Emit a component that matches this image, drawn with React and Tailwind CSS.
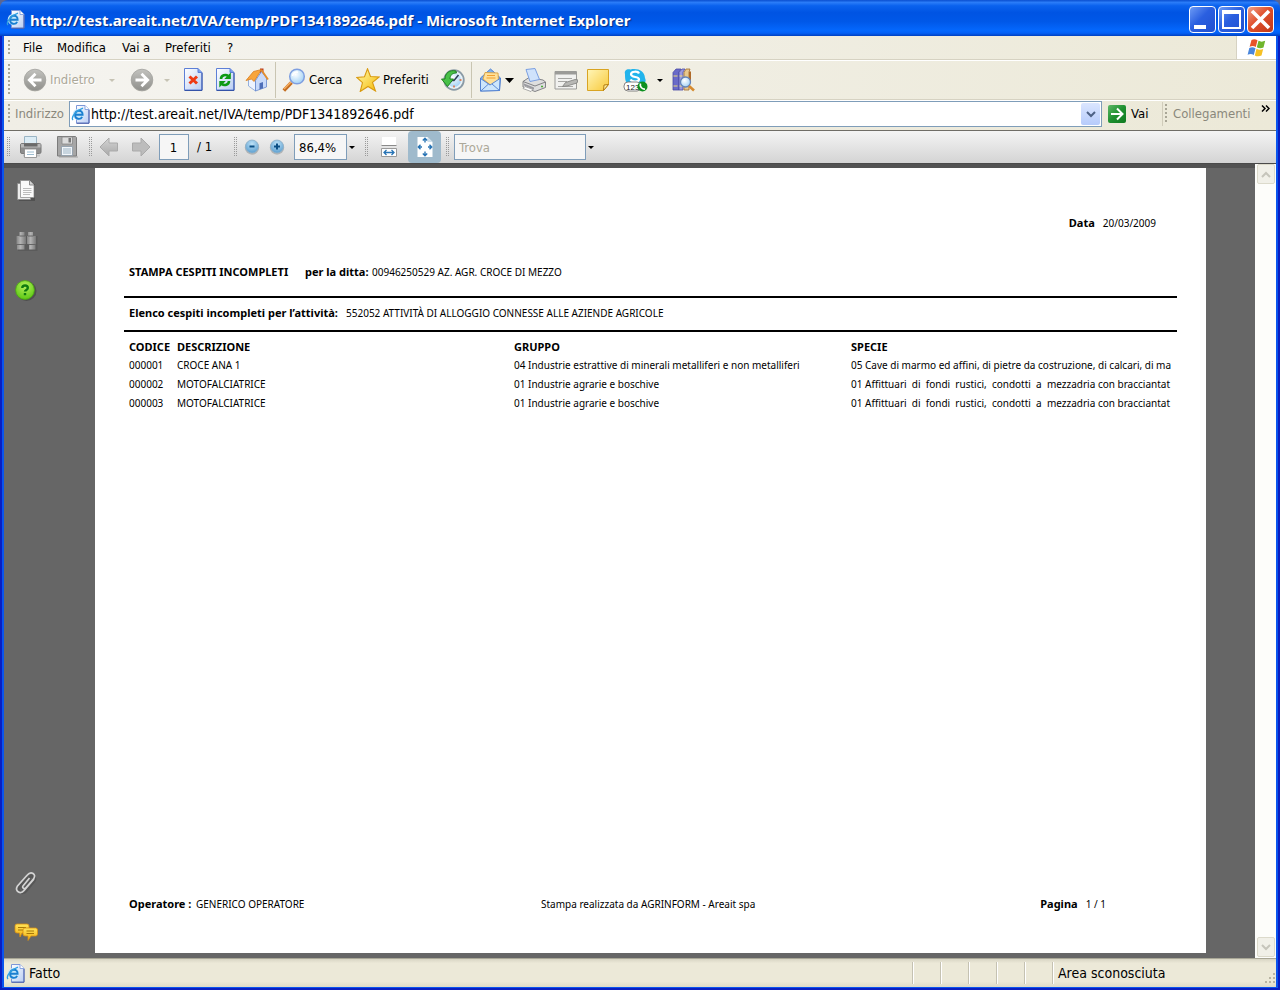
import React from "react";

const ui = "font-['DejaVu_Sans_Condensed','DejaVu_Sans',sans-serif]";

function Gradients() {
  return (
    <svg width="0" height="0" className="absolute" aria-hidden="true">
      <defs>
        <linearGradient id="gPage" x1="0" y1="0" x2="1" y2="1">
          <stop offset="0" stopColor="#ffffff" />
          <stop offset="1" stopColor="#b9cdf3" />
        </linearGradient>
        <linearGradient id="gGray" x1="0" y1="0" x2="0" y2="1">
          <stop offset="0" stopColor="#c2c2be" />
          <stop offset="1" stopColor="#8f8f8b" />
        </linearGradient>
        <linearGradient id="gNote" x1="0" y1="0" x2="1" y2="1">
          <stop offset="0" stopColor="#fff6b8" />
          <stop offset="1" stopColor="#f8c93a" />
        </linearGradient>
        <linearGradient id="gStar" x1="0" y1="0" x2="1" y2="1">
          <stop offset="0" stopColor="#fffbb0" />
          <stop offset="1" stopColor="#f5b800" />
        </linearGradient>
        <linearGradient id="gArrow" x1="0" y1="0" x2="0" y2="1">
          <stop offset="0" stopColor="#d4d4d4" />
          <stop offset="1" stopColor="#a8a8a8" />
        </linearGradient>
        <linearGradient id="gMetal" x1="0" y1="0" x2="1" y2="0">
          <stop offset="0" stopColor="#858585" />
          <stop offset="0.4" stopColor="#b4b4b4" />
          <stop offset="1" stopColor="#777777" />
        </linearGradient>
        <radialGradient id="gBlue" cx="0.5" cy="0.3" r="0.7">
          <stop offset="0" stopColor="#bfe2f7" />
          <stop offset="1" stopColor="#5c9fd0" />
        </radialGradient>
        <radialGradient id="gGreen" cx="0.5" cy="0.3" r="0.7">
          <stop offset="0" stopColor="#b4f05a" />
          <stop offset="1" stopColor="#5cc814" />
        </radialGradient>
        <radialGradient id="gLens" cx="0.4" cy="0.35" r="0.7">
          <stop offset="0" stopColor="#ffffff" />
          <stop offset="1" stopColor="#9fd0f5" />
        </radialGradient>
        <linearGradient id="gGo" x1="0" y1="0" x2="1" y2="1">
          <stop offset="0" stopColor="#5fb868" />
          <stop offset="0.5" stopColor="#1f9030" />
          <stop offset="1" stopColor="#0f7a20" />
        </linearGradient>
        <linearGradient id="gBubble" x1="0" y1="0" x2="0" y2="1">
          <stop offset="0" stopColor="#ffe45a" />
          <stop offset="1" stopColor="#f0ac10" />
        </linearGradient>
      </defs>
    </svg>
  );
}

function Svg({ w, h = w, children }) {
  return (
    <svg width={w} height={h} viewBox={`0 0 ${w} ${h}`} fill="none" className="shrink-0" aria-hidden="true">
      {children}
    </svg>
  );
}

function IePage() {
  return (
    <Svg w={19}>
      <path d="M5.500 .5h8.500l4 4v13.500H5.500z" fill="url(#gPage)" stroke="#7d97d8" />
      <path d="M18 5v13.300H5.500" stroke="#4a5eaa" />
      <path d="M14 .5v4h4" fill="#fff" stroke="#8aa5e0" />
      <circle cx="7.500" cy="9.500" r="5.800" fill="#c4e6fb" />
      <path d="M4 9.800h7.600c.2-5.600-7.500-5.400-7.500.2 0 4.700 5.600 4.800 7 1.800" stroke="#1b7fd0" strokeWidth="1.900" />
      <path d="M2 15C-.5 12 5 5.500 12 3.200" stroke="#2f9fe0" strokeWidth="1.300" />
    </Svg>
  );
}

function RoundArrow({ forward }) {
  return (
    <Svg w={24}>
      <circle cx="12" cy="12.500" r="11" fill="#dedcd2" />
      <circle cx="12" cy="12" r="10.800" fill="url(#gGray)" stroke="#a3a39f" strokeWidth=".8" />
      <g transform={forward ? "rotate(180 12 12)" : undefined} stroke="#fff" strokeWidth="2.800">
        <path d="M6 12h12.500M12.500 5.800 6.300 12l6.200 6.200" />
      </g>
    </Svg>
  );
}

function DocFrame() {
  return (
    <>
      <path d="M3.500 .5h13.500l4 4v17.500h-17.500z" fill="url(#gPage)" stroke="#5d7fd6" />
      <path d="M21 5v17.500h-17.500" stroke="#3453a8" />
      <path d="M17 .5v4h4" fill="#7aa0ee" stroke="#5d7fd6" />
    </>
  );
}

const StopIcon = () => (
  <Svg w={24}>
    <DocFrame />
    <path d="m8.500 8.500 7.500 7M16 8.500l-7.500 7" stroke="#ee3a14" strokeWidth="3" />
  </Svg>
);

const RefreshIcon = () => (
  <Svg w={24}>
    <DocFrame />
    <path d="M8 11c0-4 5-5 7-3" stroke="#0d9a14" strokeWidth="2.600" />
    <path d="M17.800 4.500v6.500h-6.500z" fill="#0d9a14" />
    <path d="M16 13c0 4-5 5-7 3" stroke="#0d9a14" strokeWidth="2.600" />
    <path d="M6.300 19.500v-6.500h6.500z" fill="#0d9a14" />
  </Svg>
);

const HomeIcon = () => (
  <Svg w={24}>
    <path d="M15 .5h3.500v7H15z" fill="#b8381e" />
    <path d="M3.500 11.500v6.500l7 5V12.500L7 7z" fill="#eef4ff" stroke="#7f9fd8" strokeWidth=".8" />
    <path d="m10.500 23 11-4v-9l-5-6.500-6 9z" fill="#c8dafa" stroke="#6688cc" strokeWidth=".8" />
    <path d="m1 12.500 7.500-9 8-2-7.500 12-2.500-2.500z" fill="#f8a53c" stroke="#d97c1c" strokeWidth=".8" />
    <path d="m16.500 2 6.500 9.500" stroke="#e58e2c" strokeWidth="1.800" />
    <path d="M14.500 21.500v-6.300l3.500-1.200v6.300z" fill="#4e6fb8" />
  </Svg>
);

const SearchIcon = () => (
  <Svg w={24}>
    <path d="m1.800 22.500 7.700-8" stroke="#c46d20" strokeWidth="3.600" />
    <path d="m2 21 7-7" stroke="#f7b063" strokeWidth="1.400" />
    <circle cx="15" cy="8.500" r="7.300" fill="url(#gLens)" stroke="#7f9fe0" strokeWidth="1.500" />
    <path d="M10.500 8c.5-3 3-4.500 5.500-3.800" stroke="#fff" strokeWidth="1.500" />
  </Svg>
);

const StarIcon = () => (
  <Svg w={24}>
    <path d="m11.500.8 3 7.700 8.700.4-6.700 5.500 3 8.600-7.500-4.500-7.800 5 2.300-8.800L.8 9.500l7.700-.8z" fill="url(#gStar)" stroke="#d99a10" strokeWidth="1.100" />
  </Svg>
);

const HistoryIcon = () => (
  <Svg w={24}>
    <circle cx="13" cy="12" r="9.800" fill="#e8f2f8" stroke="#8a9aa5" strokeWidth="1.800" />
    <circle cx="13" cy="12" r="7" fill="url(#gLens)" />
    <path d="M13 17.500v2M18.500 12h2" stroke="#e0642c" strokeWidth="1.400" />
    <path d="m17.500 7-4.500 5.500h-2" stroke="#2c3c55" strokeWidth="1.500" />
    <path d="M15 3C8.500 1.500 4 5 4 11H.5l6 7.500L12.500 11H9C9 7.500 11 5 15.500 5z" fill="#48c048" stroke="#167a1a" strokeWidth=".9" />
  </Svg>
);

const MailIcon = () => (
  <Svg w={24}>
    <path d="M1.500 10 11.500 1l10 9-1 12.500-19 .5z" fill="#7fb2ee" stroke="#4f7fd0" />
    <path d="m4 11 2-6.500L19 5l.500 8-8 4z" fill="#ffe19a" stroke="#d9a040" strokeWidth=".9" />
    <path d="M8 7.500h8M7.500 10h9" stroke="#f2a030" strokeWidth="1.200" />
    <path d="m1.500 10.500 9.500 6.500 10-6.500-.5 12-19 .5z" fill="#cde6fc" stroke="#4f7fd0" strokeWidth=".9" />
    <path d="m1.800 23 7.700-7M20.500 22.500 13 16" stroke="#4f7fd0" strokeWidth=".9" />
  </Svg>
);

const PrinterIcon = () => (
  <Svg w={24}>
    <path d="m1 13.500 6-4 14 2.500 2.500 2v5.500L13 23.500 1 19z" fill="#dedede" stroke="#77777b" strokeWidth=".9" />
    <path d="m4 1.500 9-1 4.500 11-9.500 2z" fill="#cfe2fb" stroke="#7a9ee0" />
    <path d="m1 13.500 12 4.500 10.500-4" stroke="#77777b" strokeWidth=".9" />
    <path d="m2 15.500 10 4v2l-10-4z" fill="#9a9aa0" />
    <path d="m3 18.500 8 3-2 2-8-3z" fill="#fff" stroke="#888" strokeWidth=".7" />
    <path d="M19 18.500h2" stroke="#4cab38" strokeWidth="1.500" />
  </Svg>
);

const EditIcon = () => (
  <Svg w={24}>
    <path d="M1 3.500h21.500v17.500H1z" fill="#f1f1ef" stroke="#9b9b98" />
    <path d="M1 4h21.500v2.500H1z" fill="#9b9b98" />
    <path d="M4 10.500h14M4 13.500h9M4 18.500h15" stroke="#a7a7a4" />
    <path d="m8.500 18.500 3-4 9.500-3 3 .5-1 3-10 3z" fill="#b8b8b5" stroke="#7e7e7b" strokeWidth=".8" />
  </Svg>
);

const NoteIcon = () => (
  <Svg w={24}>
    <path d="M1.500 1.500h21v15l-5 6h-16z" fill="url(#gNote)" stroke="#d9a422" />
    <path d="m17.500 22.500.5-5.500 4.500-.5z" fill="#fff0a0" stroke="#b47c10" />
  </Svg>
);

const SkypeIcon = () => (
  <Svg w={25} h={24}>
    <path d="M2 6C1 2.500 4 .5 7.500 1.500 15 0 21.500 3 22 10c2 4-1 6-4 6H6c-4-1-4-6-4-10z" fill="#22b4ec" />
    <path d="M16 5.500c-1-2.500-8-2.500-8 .8 0 3.700 8 1.700 8 5 0 3-7 3-8.500.2" stroke="#fff" strokeWidth="2.200" />
    <rect x="1" y="14" width="17" height="9" rx="4" fill="#fff" stroke="#777" strokeWidth=".9" />
    <text x="3" y="21.500" fontSize="8" fill="#222" fontFamily="Liberation Sans, sans-serif">123</text>
    <circle cx="19.500" cy="18.500" r="5" fill="#0d9020" />
    <path d="M17.500 15.500c-1 3 1.500 6 4.500 5.500" stroke="#fff" strokeWidth="1.700" />
  </Svg>
);

const ResearchIcon = () => (
  <Svg w={24}>
    <path d="M2 4.500 5 1h5l-2 3v18H2z" fill="#6a6ac8" stroke="#4a4aa4" strokeWidth=".8" />
    <path d="M8 4.500 11 1h3l-2 3v18H8z" fill="#9a9ae0" stroke="#4a4aa4" strokeWidth=".8" />
    <path d="M13 4.500 15 1h4l-1 3v18h-5z" fill="#e8c88c" stroke="#a06a2c" strokeWidth=".8" />
    <path d="M18 3.500h2v10h-2z" fill="#b06a28" />
    <path d="M2.500 8h4M2.500 18h4M8.500 8h3M8.500 18h3" stroke="#f0dc78" />
    <circle cx="14.500" cy="14" r="5" fill="url(#gLens)" stroke="#6484b8" strokeWidth="1.300" />
    <path d="m18 18 5 4.500" stroke="#d58a30" strokeWidth="2.600" />
  </Svg>
);

const Caret = ({ color = "#000", w = 6 }) => (
  <svg width={w} height={w === 9 ? 5 : 3} viewBox="0 0 6 3" preserveAspectRatio="none" className="shrink-0" aria-hidden="true">
    <path d="M0 0h6L3 3z" fill={color} />
  </svg>
);

const WinFlag = () => (
  <Svg w={22}>
    <path d="M5.500 3c2-1 4-1 6 .3L9.800 10c-2-1.200-4-1.200-6.200-.3z" fill="#e8542a" />
    <path d="M12.500 3.800c2 1.100 4.200 1.100 6.700 0l-1.700 6.600c-2.300 1.100-4.700 1-6.700-.2z" fill="#6fb52c" />
    <path d="M3.300 11c2.200-1 4.200-.9 6.200.3L7.800 18c-2-1.200-4-1.200-6.200-.2z" fill="#4a86dc" />
    <path d="M10.500 11.800c2 1.100 4.200 1.200 6.700.1L15.500 18.600c-2.300 1-4.700.9-6.700-.2z" fill="#f6c024" />
  </Svg>
);

const PdfPrint = () => (
  <Svg w={24}>
    <path d="M4 19.500h17v2H4z" fill="#000" opacity=".12" />
    <path d="M5.500 1.500h12v8h-12z" fill="#dcecf5" stroke="#9ab4c4" />
    <rect x="1.500" y="8.500" width="20.500" height="10" rx="1.500" fill="#8d8d8d" stroke="#7a7a7a" />
    <path d="M2 9h19.500v3.500H2z" fill="#b9b9b9" />
    <path d="M5 8.500h13.500v3H5z" fill="#6a6a6a" />
    <path d="M5.500 14h12v8.500h-12z" fill="#fff" stroke="#888" strokeWidth=".8" />
    <path d="M8 17h7M8 19.500h7" stroke="#9cbcd0" />
  </Svg>
);

const PdfSave = () => (
  <Svg w={24}>
    <path d="M4 21h19v2H4z" fill="#000" opacity=".12" />
    <path d="M2.500 1.500h18l1 1v18.500h-19z" fill="#a6a6a6" stroke="#7c7c7c" />
    <path d="M7 2h10.500v7H7z" fill="#dcdcdc" stroke="#888" strokeWidth=".8" />
    <path d="M13.500 3h2.500v4.500h-2.500z" fill="#777" />
    <path d="M6.500 11.500h11v9h-11z" fill="#f2f6fa" stroke="#8a9aa8" strokeWidth=".8" />
    <path d="M8 14h8M8 16h8M8 18h8" stroke="#9db4c4" />
  </Svg>
);

const PdfArrow = ({ right }) => (
  <Svg w={20}>
    <g transform={right ? "rotate(180 10 10)" : undefined}>
      <path d="m1 10 9-9v5h8.500v8H10v5z" fill={right ? "#bcbcbc" : "url(#gArrow)"} stroke="#aaa" />
    </g>
  </Svg>
);

const ZoomDot = ({ plus }) => (
  <Svg w={16}>
    <circle cx="8" cy="8.500" r="7.200" fill="#b4b4b4" />
    <circle cx="8" cy="7.500" r="6.500" fill="url(#gBlue)" stroke="#8fb2cc" strokeWidth=".8" />
    <path d={plus ? "M5 7.500h6M8 4.500v6" : "M5.500 7.500h5"} stroke="#0b4f85" strokeWidth="2" />
  </Svg>
);

const FitWidth = () => (
  <Svg w={18} h={22}>
    <path d="M2 1h14v9H2z" fill="#fff" />
    <path d="M1.500 9.500h15" stroke="#8a8a8a" />
    <path d="M1.500 12.500h15v8h-15z" fill="#fff" stroke="#9a9a9a" />
    <path d="M4 16.500h10M6.500 14 4 16.500 6.500 19M11.500 14l2.500 2.500-2.500 2.500" stroke="#2874b5" strokeWidth="1.300" />
  </Svg>
);

const FitPage = () => (
  <Svg w={18} h={22}>
    <path d="M1.500 1h10l5 5v15h-15z" fill="#fff" />
    <path d="M11.500 1v5h5" fill="#cfe0ec" />
    <path d="M9 2v4.500M6.800 4.500 9 2.200l2.200 2.300M9 15.500V20M6.800 17.500 9 19.800l2.200-2.300M2 11h4M4.500 8.800 2.300 11l2.200 2.200M12 11h4M13.500 8.800l2.200 2.200-2.200 2.200" stroke="#2874b5" strokeWidth="1.400" />
  </Svg>
);

const PagesIcon = () => (
  <Svg w={24}>
    <path d="M5 5h16v17H5z" fill="#000" opacity=".2" />
    <path d="M3.500 4.500h13v16h-13z" fill="#ececec" stroke="#8a8a8a" strokeWidth=".8" />
    <path d="M6.500 1.500h9l4.500 4.500v12.500H6.500z" fill="#fafafa" stroke="#909090" strokeWidth=".8" />
    <path d="M15.500 1.500V6H20" fill="#d4d4d4" stroke="#777" strokeWidth=".8" />
    <path d="M9 9.500h8.500M9 11.500h8.500M9 13.500h8.500M9 15.500h7" stroke="#b4b4b4" strokeWidth=".9" />
  </Svg>
);

const Binoculars = () => (
  <Svg w={24}>
    <path d="M4 7h19.500v15H4z" fill="#000" opacity=".1" />
    <path d="M5.500 3h5v4h1.500v8h-1.500v5.500H3V15h-.5V7h3z" fill="url(#gMetal)" />
    <path d="M14 3h5v4h3v8h-.5v5.500H15V15h-2V7h1z" fill="url(#gMetal)" />
    <path d="M3 15.500h8M14.500 15.500h7.500M5.500 7h6M14 7h5.500" stroke="#666" />
  </Svg>
);

const HelpDot = () => (
  <Svg w={24}>
    <circle cx="12.500" cy="13" r="10" fill="#4f4f4f" />
    <circle cx="11" cy="12" r="9.400" fill="url(#gGreen)" stroke="#4aa810" strokeWidth=".8" />
    <path d="M8.300 10c0-3.300 5.500-3.300 5.500 0 0 1.900-2.800 1.900-2.800 3.600M11 15v2.200" stroke="#0f7a10" strokeWidth="2.400" />
  </Svg>
);

const Clip = () => (
  <Svg w={24}>
    <path d="m17 9-6.500 8c-1.600 2-4.300-.2-2.700-2.200L14.500 6.500c2.700-3.300 7.300.2 4.500 3.800L11 20c-3.500 4.200-9.500-.5-6-5l7.500-9" stroke="#3e3e3e" strokeWidth="3" transform="translate(.8 0)" opacity=".4" />
    <path d="m15.500 7-6.500 8c-1.400 1.700 1.500 3.500 2.900 1.800L19.500 8c3.500-5-2.500-8.500-6.200-4L3.500 15c-3.500 5 3 9 6.600 4.500L20 8" stroke="#d4d4d4" strokeWidth="1.700" />
  </Svg>
);

const Bubbles = () => (
  <Svg w={24}>
    <path d="M3 3h10a2 2 0 0 1 2 2v5a2 2 0 0 1-2 2H8l-2 4-.5-4H3a2 2 0 0 1-2-2V5a2 2 0 0 1 2-2z" fill="url(#gBubble)" stroke="#d99010" strokeWidth=".8" />
    <path d="M4 6.500h8M4 9h6" stroke="#a87808" />
    <path d="M11 7h10.500a2 2 0 0 1 2 2v4a2 2 0 0 1-2 2H17l-3 4.500V15h-3a2 2 0 0 1-2-2V9a2 2 0 0 1 2-2z" fill="url(#gBubble)" stroke="#d99010" strokeWidth=".8" />
    <path d="M12.500 10h7.500M12.500 12.500h7.500" stroke="#a87808" />
  </Svg>
);

const Grip = ({ className = "" }) => (
  <span className={`w-[3px] shrink-0 bg-[radial-gradient(circle_at_1px_1px,#a9a696_1px,transparent_1px)] bg-size-[3px_4px] ${className}`} />
);

const PdfGrip = ({ className = "" }) => (
  <span className={`h-5 w-[4px] shrink-0 bg-[radial-gradient(circle_at_0px_0px,#9a9a9a_1px,transparent_1px)] bg-size-[2px_2px] ${className}`} />
);

const Tool = ({ label, className = "w-8", children }) => (
  <button type="button" aria-label={label} className={`flex h-8 shrink-0 items-center justify-center ${className}`}>
    {children}
  </button>
);

const Bold = ({ className = "", children }) => (
  <b className={`text-[11px] ${className}`}>{children}</b>
);

const rows = [
  ["000001", "CROCE ANA 1", "04 Industrie estrattive di minerali metalliferi e non metalliferi", "05 Cave di marmo ed affini, di pietre da costruzione, di calcari, di ma"],
  ["000002", "MOTOFALCIATRICE", "01 Industrie agrarie e boschive", "01 Affittuari  di  fondi  rustici,  condotti  a  mezzadria con bracciantat"],
  ["000003", "MOTOFALCIATRICE", "01 Industrie agrarie e boschive", "01 Affittuari  di  fondi  rustici,  condotti  a  mezzadria con bracciantat"],
];

function TitleBar() {
  const btn = "flex size-[27px] items-center justify-center rounded-[4px] border border-white";
  return (
    <header className="flex h-9 shrink-0 items-center rounded-t-lg bg-[linear-gradient(180deg,#0a4fd0_0%,#2a7cf8_7%,#0a62ee_16%,#0054e3_35%,#0058e8_60%,#0468fe_85%,#0460f5_92%,#0040c0_100%)] pr-[6px] pl-[6px] pt-[3px]">
      <IePage />
      <h1 className="ml-[5px] flex-1 truncate font-['Noto_Sans','Open_Sans',sans-serif] text-[15px] leading-6 font-bold text-white [text-shadow:1px_1px_1px_#0a2a80]">
        http://test.areait.net/IVA/temp/PDF1341892646.pdf - Microsoft Internet Explorer
      </h1>
      <div className="flex gap-[2px]">
        <button type="button" aria-label="Riduci a icona" className={`${btn} bg-[linear-gradient(135deg,#6d9bf5,#2a5fe0_45%,#2150d0)]`}>
          <Svg w={25}><path d="M4 18h12v4H4z" fill="#fff" /></Svg>
        </button>
        <button type="button" aria-label="Ingrandisci" className={`${btn} bg-[linear-gradient(135deg,#6d9bf5,#2a5fe0_45%,#2150d0)]`}>
          <Svg w={25}><path d="M3 3h19v19H3zM5 7v13h15V7z" fillRule="evenodd" fill="#fff" /></Svg>
        </button>
        <button type="button" aria-label="Chiudi" className={`${btn} bg-[linear-gradient(135deg,#f0a088,#e0502c_45%,#c03818)]`}>
          <Svg w={25}><path d="m4 4 17 17M21 4 4 21" stroke="#fff" strokeWidth="3.600" /></Svg>
        </button>
      </div>
    </header>
  );
}

function MenuBar() {
  return (
    <nav className="flex h-6 shrink-0 items-stretch border-b border-[#d6d2c2] bg-[linear-gradient(90deg,#f5f4f0,#ece9d8)]">
      <Grip className="my-1 mr-3 ml-1" />
      <button type="button" className="w-[34px] text-left">File</button>
      <button type="button" className="w-[65px] text-left">Modifica</button>
      <button type="button" className="w-[43px] text-left">Vai a</button>
      <button type="button" className="w-[62px] text-left">Preferiti</button>
      <button type="button" className="w-4 text-left">?</button>
      <span className="ml-auto flex w-10 items-center justify-center border-l border-[#d6d2c2] bg-white"><WinFlag /></span>
    </nav>
  );
}

function StandardBar() {
  return (
    <div className="flex h-10 shrink-0 items-center border-t border-b border-t-white border-b-[#d6d2c2] bg-[linear-gradient(90deg,#f5f4f0,#ece9d8)]">
      <Grip className="mr-3 ml-1 h-8" />
      <button type="button" className="flex w-20 items-center gap-[3px] text-[#aca899]">
        <RoundArrow />
        <span className="[text-shadow:1px_1px_0_#fff]">Indietro</span>
      </button>
      <Tool label="Cronologia indietro" className="w-[18px]"><Caret color="#c6c3b4" /></Tool>
      <Tool label="Avanti" className="ml-[9px] w-6"><RoundArrow forward /></Tool>
      <Tool label="Cronologia avanti" className="w-[26px]"><Caret color="#c6c3b4" /></Tool>
      <Tool label="Termina" className="mr-[3px] w-[26px]"><StopIcon /></Tool>
      <Tool label="Aggiorna"><RefreshIcon /></Tool>
      <Tool label="Pagina iniziale"><HomeIcon /></Tool>
      <span className="mx-[2px] h-9 w-px bg-[#c9c5b2]" />
      <button type="button" className="ml-1 flex w-[74px] items-center gap-[3px]"><SearchIcon />Cerca</button>
      <button type="button" className="flex w-[81px] items-center gap-[3px]"><StarIcon />Preferiti</button>
      <Tool label="Cronologia"><HistoryIcon /></Tool>
      <span className="ml-[2px] h-9 w-px bg-[#c9c5b2]" />
      <Tool label="Posta" className="ml-[7px] w-6"><MailIcon /></Tool>
      <Tool label="Opzioni posta" className="w-3"><Caret w={9} /></Tool>
      <Tool label="Stampa" className="ml-[7px] w-6"><PrinterIcon /></Tool>
      <Tool label="Modifica pagina" className="ml-1 w-8"><EditIcon /></Tool>
      <Tool label="Note"><NoteIcon /></Tool>
      <Tool label="Skype" className="ml-[3px] w-9"><SkypeIcon /></Tool>
      <Tool label="Opzioni Skype" className="w-[14px]"><Caret /></Tool>
      <Tool label="Ricerche"><ResearchIcon /></Tool>
    </div>
  );
}

function AddressBar() {
  return (
    <div className="flex h-[30px] shrink-0 items-center border-t border-t-white bg-[linear-gradient(90deg,#f0eee6,#ece9d8)] pb-[3px]">
      <Grip className="mr-1 ml-1 h-5" />
      <label htmlFor="address" className="w-[54px] text-[#8a887c]">Indirizzo</label>
      <div className="flex h-[26px] flex-1 items-center border border-[#7f9db9] bg-white pr-px pl-[1px]">
        <IePage />
        <input id="address" type="text" defaultValue="http://test.areait.net/IVA/temp/PDF1341892646.pdf" className="ml-px min-w-0 flex-1 bg-transparent text-[14px] outline-none" />
        <button type="button" aria-label="Mostra indirizzi" className="flex h-[22px] w-[19px] items-center justify-center rounded-[2px] bg-[linear-gradient(180deg,#dbe6ff,#b6cbfb)]">
          <Svg w={10} h={7}><path d="m1 1 4 4 4-4" stroke="#4d6185" strokeWidth="2" /></Svg>
        </button>
      </div>
      <button type="button" className="ml-[6px] flex w-[54px] items-center gap-[5px]">
        <Svg w={18}>
          <rect width="18" height="18" rx="2" fill="url(#gGo)" />
          <path d="M3 9h11M9 3.500 14.500 9 9 14.500" stroke="#fff" strokeWidth="2" />
        </Svg>
        Vai
      </button>
      <span className="h-6 w-px border-l border-[#d0ccba]" />
      <Grip className="mr-[5px] ml-[2px] h-5" />
      <span className="w-[88px] text-[#8a887c]">Collegamenti</span>
      <button type="button" aria-label="Altri collegamenti" className="mr-[6px] self-start pt-1">
        <Svg w={9} h={7}><path d="m1 .5 3 3-3 3M5 .5l3 3-3 3" stroke="#000" strokeWidth="1.500" /></Svg>
      </button>
    </div>
  );
}

function PdfBar() {
  return (
    <div className="flex h-[34px] shrink-0 items-center border-t border-b border-t-[#6f6d66] border-b-[#4a4a4a] bg-[linear-gradient(180deg,#f4f4f4,#d4d4d4)]">
      <PdfGrip className="ml-[3px]" />
      <Tool label="Stampa documento" className="ml-2 w-6"><PdfPrint /></Tool>
      <Tool label="Salva copia" className="ml-3 w-6"><PdfSave /></Tool>
      <PdfGrip className="ml-[10px]" />
      <Tool label="Pagina precedente" className="ml-[6px] w-5"><PdfArrow /></Tool>
      <Tool label="Pagina successiva" className="ml-3 w-5"><PdfArrow right /></Tool>
      <input aria-label="Pagina" defaultValue="1" className="ml-2 h-[26px] w-[30px] border border-[#7f9db9] bg-[#f6f6f6] pr-px text-center" />
      <span className="ml-2 w-[37px]">/ 1</span>
      <PdfGrip />
      <Tool label="Riduci" className="ml-[6px] w-4"><ZoomDot /></Tool>
      <Tool label="Ingrandisci pagina" className="ml-[9px] w-4"><ZoomDot plus /></Tool>
      <input aria-label="Zoom" defaultValue="86,4%" className="ml-[9px] h-[26px] w-[53px] border border-[#7f9db9] bg-[#f6f6f6] pl-1" />
      <Tool label="Livelli di zoom" className="w-[10px]"><Caret /></Tool>
      <PdfGrip className="ml-2" />
      <Tool label="Adatta larghezza" className="ml-[11px] w-[18px]"><FitWidth /></Tool>
      <Tool label="Adatta pagina" className="ml-[10px] w-[33px] rounded-[4px] bg-[#9fbacc]"><FitPage /></Tool>
      <PdfGrip className="ml-[5px]" />
      <input aria-label="Trova" placeholder="Trova" className="ml-1 h-[26px] w-[132px] border border-[#7f9db9] bg-[#f6f6f6] pl-1 placeholder:text-[#aca899]" />
      <Tool label="Opzioni di ricerca" className="w-[10px]"><Caret /></Tool>
    </div>
  );
}

function Report() {
  return (
    <article className="flex min-w-0 flex-1 flex-col bg-white pr-[29px] pb-[40px] pl-[29px] pt-[46px] font-['Noto_Sans','Open_Sans',sans-serif] text-[10px] leading-[18px] whitespace-nowrap text-black">
      <p className="flex h-[18px] items-baseline justify-end gap-2 pr-[21px]"><Bold>Data</Bold><span>20/03/2009</span></p>
      <p className="mt-[31px] flex h-[18px] items-baseline pl-[5px]">
        <Bold className="w-[176px]">STAMPA CESPITI INCOMPLETI</Bold>
        <Bold className="w-[67px]">per la ditta:</Bold>
        <span>00946250529 AZ. AGR. CROCE DI MEZZO</span>
      </p>
      <p className="mt-[15px] flex h-9 items-baseline border-t-2 border-b-2 border-black pt-[6px] pl-[5px]">
        <Bold className="w-[217px]">Elenco cespiti incompleti per l’attività:</Bold>
        <span>552052 ATTIVITÀ DI ALLOGGIO CONNESSE ALLE AZIENDE AGRICOLE</span>
      </p>
      <div className="mt-[6px] pl-[5px]">
        <table className="w-full table-fixed text-left">
          <thead className="text-[11px]">
            <tr>
              <th className="w-[48px] p-0">CODICE</th>
              <th className="w-[337px] p-0">DESCRIZIONE</th>
              <th className="w-[337px] p-0">GRUPPO</th>
              <th className="p-0">SPECIE</th>
            </tr>
          </thead>
          <tbody className="leading-[19px]">
            {rows.map((r) => (
              <tr key={r[0]}>
                {r.map((c, i) => (
                  <td key={i} className="p-0 whitespace-pre">{c}</td>
                ))}
              </tr>
            ))}
          </tbody>
        </table>
      </div>
      <footer className="mt-auto flex h-[18px] items-baseline pl-[5px]">
        <p className="flex w-[412px] items-baseline"><Bold className="w-[67px]">Operatore :</Bold>GENERICO OPERATORE</p>
        <p>Stampa realizzata da AGRINFORM - Areait spa</p>
        <p className="mr-[71px] ml-auto flex items-baseline gap-2"><Bold>Pagina</Bold>1 / 1</p>
      </footer>
    </article>
  );
}

function ScrollBar() {
  const b = "flex h-[20px] w-[18px] items-center justify-center rounded-[2px] border border-[#dcdacb] bg-[#f1f0e8]";
  return (
    <div className="flex w-[21px] shrink-0 flex-col items-center justify-between bg-[#fdfdfa] pb-px">
      <button type="button" aria-label="Scorri su" className={b}><Svg w={10} h={7}><path d="m1 6 4-4 4 4" stroke="#c6c5bb" strokeWidth="2" /></Svg></button>
      <button type="button" aria-label="Scorri giù" className={b}><Svg w={10} h={7}><path d="m1 1 4 4 4-4" stroke="#c6c5bb" strokeWidth="2" /></Svg></button>
    </div>
  );
}

function Viewer() {
  return (
    <main className="flex flex-1 bg-[#666666]">
      <div className="flex flex-1 border-t-4 border-t-[#525252] pb-[5px]">
        <aside className="flex w-[91px] shrink-0 flex-col items-start pt-[11px] pb-2 pl-[10px]">
          <button type="button" aria-label="Pagine"><PagesIcon /></button>
          <button type="button" aria-label="Cerca" className="mt-[26px]"><Binoculars /></button>
          <button type="button" aria-label="Guida" className="mt-[25px]"><HelpDot /></button>
          <button type="button" aria-label="Allegati" className="mt-auto"><Clip /></button>
          <button type="button" aria-label="Commenti" className="mt-[26px]"><Bubbles /></button>
        </aside>
        <Report />
        <div className="w-[49px] shrink-0" />
      </div>
      <ScrollBar />
    </main>
  );
}

function StatusBar() {
  const cell = "h-[22px] w-7 border-l border-[#c5c2b2] shadow-[inset_1px_0_0_#fff]";
  return (
    <footer className="flex h-[29px] shrink-0 items-center border-t border-[#a9a796] bg-[linear-gradient(180deg,#d8d5c4,#ece9d8_15%,#ece9d8_80%,#dedbc8)] text-[14px]">
      <span className="ml-[2px]"><IePage /></span>
      <span className="ml-1 flex-1">Fatto</span>
      <span className={cell} /><span className={cell} /><span className={cell} /><span className={cell} /><span className={cell} />
      <span className="flex h-[22px] w-[224px] shrink-0 items-center border-l border-[#c5c2b2] pl-[5px] shadow-[inset_1px_0_0_#fff]">
        <span className="flex-1">Area sconosciuta</span>
        <span className="self-end">
          <Svg w={12}>
            <path d="M9 1h2v2H9zM5 5h2v2H5zM9 5h2v2H9zM1 9h2v2H1zM5 9h2v2H5zM9 9h2v2H9z" fill="#b8b4a2" />
          </Svg>
        </span>
      </span>
    </footer>
  );
}

export default function App() {
  return (
    <div className={`flex min-h-screen flex-col bg-[#5a6694] text-[13px] leading-[18px] text-black ${ui}`}>
      <Gradients />
      <TitleBar />
      <div className="flex flex-1 flex-col border-x-2 border-b-2 border-[#0a1ec0]">
        <div className="flex flex-1 flex-col border-x-2 border-b border-[#0a54ee]">
          <MenuBar />
          <StandardBar />
          <AddressBar />
          <PdfBar />
          <Viewer />
          <StatusBar />
        </div>
      </div>
    </div>
  );
}
